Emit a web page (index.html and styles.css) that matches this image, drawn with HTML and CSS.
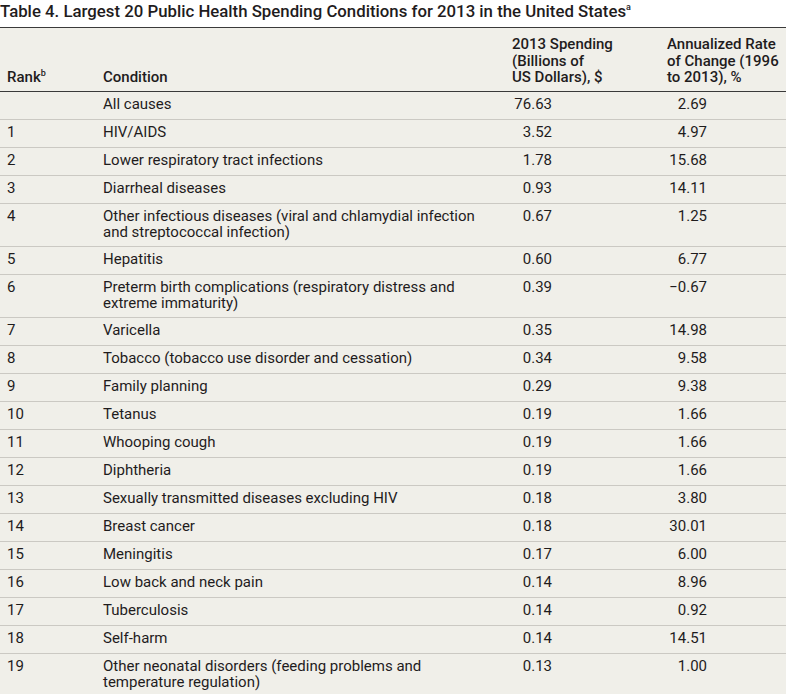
FILE: index.html
```html
<!DOCTYPE html>
<html lang="en">
<head>
<meta charset="utf-8">
<title>Table 4</title>
<link rel="stylesheet" href="styles.css">
</head>
<body>
<div class="page">
  <h1 class="title">Table 4. Largest 20 Public Health Spending Conditions for 2013 in the United States<sup>a</sup></h1>
  <table class="data">
    <thead>
      <tr>
        <th class="c-rank">Rank<sup>b</sup></th>
        <th class="c-cond">Condition</th>
        <th class="c-spend">2013 Spending<br>(Billions of<br>US Dollars), $</th>
        <th class="c-rate">Annualized Rate<br>of Change (1996<br>to 2013), %</th>
      </tr>
    </thead>
    <tbody>
      <tr><td class="c-rank"></td><td class="c-cond">All causes</td><td class="c-spend"><span class="num">76.63</span></td><td class="c-rate"><span class="num">2.69</span></td></tr>
      <tr><td class="c-rank">1</td><td class="c-cond">HIV/AIDS</td><td class="c-spend"><span class="num">3.52</span></td><td class="c-rate"><span class="num">4.97</span></td></tr>
      <tr><td class="c-rank">2</td><td class="c-cond">Lower respiratory tract infections</td><td class="c-spend"><span class="num">1.78</span></td><td class="c-rate"><span class="num">15.68</span></td></tr>
      <tr><td class="c-rank">3</td><td class="c-cond">Diarrheal diseases</td><td class="c-spend"><span class="num">0.93</span></td><td class="c-rate"><span class="num">14.11</span></td></tr>
      <tr class="wrap"><td class="c-rank">4</td><td class="c-cond">Other infectious diseases (viral and chlamydial infection<br>and streptococcal infection)</td><td class="c-spend"><span class="num">0.67</span></td><td class="c-rate"><span class="num">1.25</span></td></tr>
      <tr><td class="c-rank">5</td><td class="c-cond">Hepatitis</td><td class="c-spend"><span class="num">0.60</span></td><td class="c-rate"><span class="num">6.77</span></td></tr>
      <tr class="wrap"><td class="c-rank">6</td><td class="c-cond">Preterm birth complications (respiratory distress and<br>extreme immaturity)</td><td class="c-spend"><span class="num">0.39</span></td><td class="c-rate"><span class="num">−0.67</span></td></tr>
      <tr><td class="c-rank">7</td><td class="c-cond">Varicella</td><td class="c-spend"><span class="num">0.35</span></td><td class="c-rate"><span class="num">14.98</span></td></tr>
      <tr><td class="c-rank">8</td><td class="c-cond">Tobacco (tobacco use disorder and cessation)</td><td class="c-spend"><span class="num">0.34</span></td><td class="c-rate"><span class="num">9.58</span></td></tr>
      <tr><td class="c-rank">9</td><td class="c-cond">Family planning</td><td class="c-spend"><span class="num">0.29</span></td><td class="c-rate"><span class="num">9.38</span></td></tr>
      <tr><td class="c-rank">10</td><td class="c-cond">Tetanus</td><td class="c-spend"><span class="num">0.19</span></td><td class="c-rate"><span class="num">1.66</span></td></tr>
      <tr><td class="c-rank">11</td><td class="c-cond">Whooping cough</td><td class="c-spend"><span class="num">0.19</span></td><td class="c-rate"><span class="num">1.66</span></td></tr>
      <tr><td class="c-rank">12</td><td class="c-cond">Diphtheria</td><td class="c-spend"><span class="num">0.19</span></td><td class="c-rate"><span class="num">1.66</span></td></tr>
      <tr><td class="c-rank">13</td><td class="c-cond">Sexually transmitted diseases excluding HIV</td><td class="c-spend"><span class="num">0.18</span></td><td class="c-rate"><span class="num">3.80</span></td></tr>
      <tr><td class="c-rank">14</td><td class="c-cond">Breast cancer</td><td class="c-spend"><span class="num">0.18</span></td><td class="c-rate"><span class="num">30.01</span></td></tr>
      <tr><td class="c-rank">15</td><td class="c-cond">Meningitis</td><td class="c-spend"><span class="num">0.17</span></td><td class="c-rate"><span class="num">6.00</span></td></tr>
      <tr><td class="c-rank">16</td><td class="c-cond">Low back and neck pain</td><td class="c-spend"><span class="num">0.14</span></td><td class="c-rate"><span class="num">8.96</span></td></tr>
      <tr><td class="c-rank">17</td><td class="c-cond">Tuberculosis</td><td class="c-spend"><span class="num">0.14</span></td><td class="c-rate"><span class="num">0.92</span></td></tr>
      <tr><td class="c-rank">18</td><td class="c-cond">Self-harm</td><td class="c-spend"><span class="num">0.14</span></td><td class="c-rate"><span class="num">14.51</span></td></tr>
      <tr class="wrap"><td class="c-rank">19</td><td class="c-cond">Other neonatal disorders (feeding problems and<br>temperature regulation)</td><td class="c-spend"><span class="num">0.13</span></td><td class="c-rate"><span class="num">1.00</span></td></tr>
    </tbody>
  </table>
</div>
</body>
</html>
```
FILE: styles.css
```css
html, body {
  margin: 0;
  padding: 0;
  background: #ffffff;
}
body {
  font-family: Roboto, "Liberation Sans", sans-serif;
  color: #1f1c1d;
  width: 786px;
  height: 694px;
  overflow: hidden;
}
.page {
  width: 786px;
}
.title {
  margin: 0;
  height: 27px;
  font-size: 16.8px;
  font-weight: 500;
  line-height: 22px;
  padding-left: 0;
  white-space: nowrap;
  border-bottom: 1px solid #3a3a3a;
}
.title sup {
  font-size: 9px;
  line-height: 0;
  vertical-align: 7px;
}
.data {
  width: 786px;
  border-collapse: collapse;
  background: #f0efe9;
  font-size: 15px;
  table-layout: fixed;
}
.data th {
  font-weight: 500;
  text-align: left;
  vertical-align: bottom;
  line-height: 16.5px;
  padding: 8px 0 5px 0;
  border-bottom: 1px solid #3a3a3a;
}
.data th sup {
  font-size: 9px;
  line-height: 0;
  vertical-align: 6px;
}
.data td {
  vertical-align: top;
  line-height: 16.5px;
  padding: 4.5px 0 6px 0;
  border-bottom: 1px solid #cbc9c3;
  white-space: nowrap;
}
.data tr.wrap td {
  padding-top: 4px;
  padding-bottom: 5px;
}
.c-rank {
  width: 96px;
  padding-left: 7px !important;
}
.c-cond {
  width: 409px;
}
.c-spend {
  width: 155px;
}
.c-rate {
  width: auto;
}
.num {
  display: inline-block;
  width: 40px;
  text-align: right;
}
```
